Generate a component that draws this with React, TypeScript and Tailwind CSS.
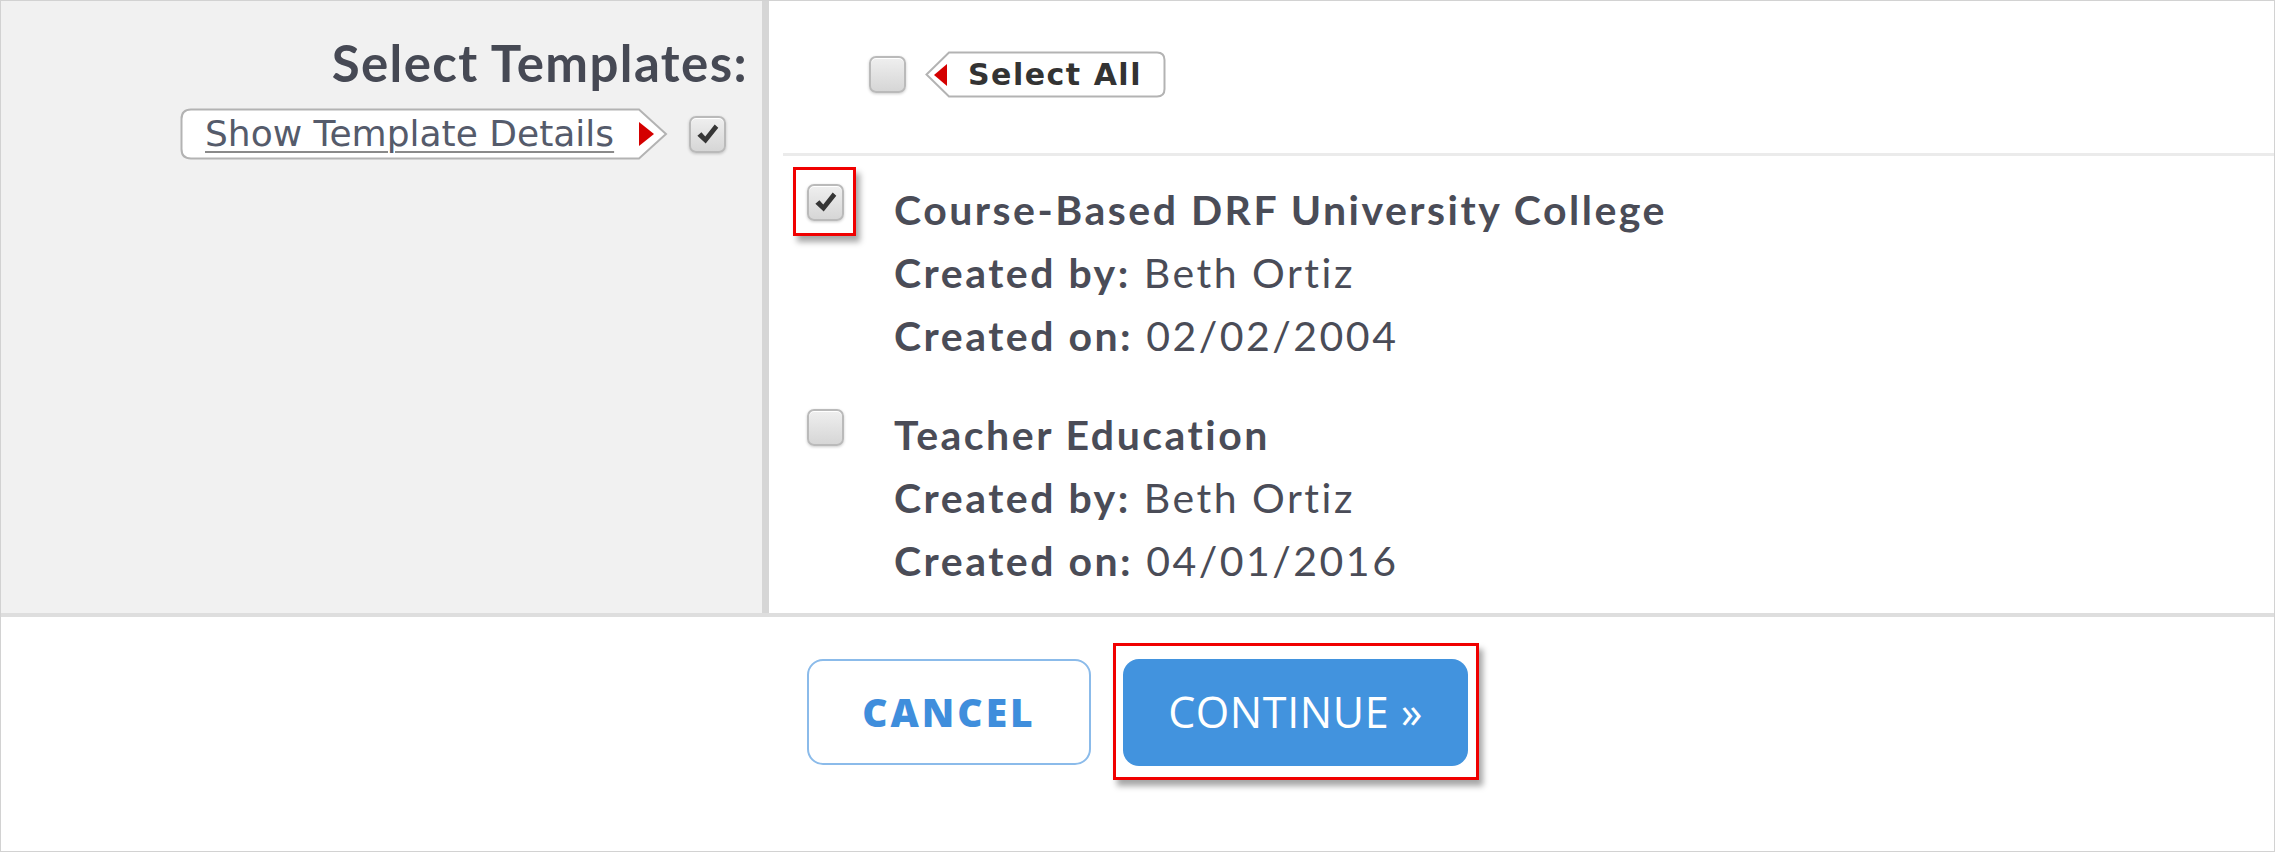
import React from "react";

type Template = { name: string; by: string; on: string; checked: boolean };

const templates: Template[] = [
  { name: "Course-Based DRF University College", by: "Beth Ortiz", on: "02/02/2004", checked: true },
  { name: "Teacher Education", by: "Beth Ortiz", on: "04/01/2016", checked: false },
];

function Check() {
  return (
    <svg width="27" height="27" viewBox="0 0 24 24" className="block">
      <path d="M3 13.2 L6.6 10 L10 13.8 L18.4 3.2 L21.6 6 L10.4 20 Z" fill="#363636" />
    </svg>
  );
}

function Checkbox({ checked }: { checked: boolean }) {
  return (
    <div className="w-[37px] h-[37px] shrink-0 rounded-[7px] border-2 border-[#bababa] bg-gradient-to-b from-[#efefef] to-[#d6d6d6] shadow-[inset_0_1px_0_#fff,0_1px_3px_rgba(0,0,0,0.2)] flex items-center justify-center">
      {checked && <Check />}
    </div>
  );
}

function ShowDetailsTag() {
  return (
    <button className="relative w-[488px] h-[52px] flex items-center pl-[25px]">
      <svg width="488" height="52" viewBox="0 0 488 52" className="absolute inset-0">
        <path
          d="M11 1.5 H459 L486 26 L459 50.5 H11 Q1.5 50.5 1.5 41 V11 Q1.5 1.5 11 1.5 Z"
          fill="#fff"
          stroke="#b3b3b3"
          strokeWidth="2"
        />
      </svg>
      <span className="relative font-['DejaVu_Sans',sans-serif] text-[36px] leading-none text-[#555b6b] underline decoration-[#8a8a8a] decoration-2 underline-offset-[5px]">
        Show Template Details
      </span>
      <svg width="15" height="24" viewBox="0 0 15 24" className="relative ml-[25px]">
        <path d="M0 0 L15 12 L0 24 Z" fill="#d40000" />
      </svg>
    </button>
  );
}

function SelectAllTag() {
  return (
    <button className="relative w-[241px] h-[47px] flex items-center pl-[9px]">
      <svg width="241" height="47" viewBox="0 0 241 47" className="absolute inset-0">
        <path
          d="M24 1.5 H232 Q239.5 1.5 239.5 9 V38 Q239.5 45.5 232 45.5 H24 L1.5 23.5 Z"
          fill="#fff"
          stroke="#b3b3b3"
          strokeWidth="2"
        />
      </svg>
      <svg width="13" height="22" viewBox="0 0 13 22" className="relative">
        <path d="M13 0 L0 11 L13 22 Z" fill="#d40000" />
      </svg>
      <span className="relative ml-[21px] font-['DejaVu_Sans',sans-serif] font-bold text-[30px] leading-none tracking-[1.5px] text-[#333]">
        Select All
      </span>
    </button>
  );
}

function TemplateRow({ t }: { t: Template }) {
  return (
    <div className="flex">
      <div className="relative mt-[6px] h-[37px]">
        {t.checked && (
          <div className="absolute left-[-14px] right-[-12px] top-[-17px] bottom-[-15px] border-[3px] border-[#f00000] shadow-[4px_6px_6px_rgba(0,0,0,0.35)]" />
        )}
        <Checkbox checked={t.checked} />
      </div>
      <div className="ml-[50px] text-[41px] leading-[63px] tracking-[2.5px] text-[#4a4c57]">
        <div className="font-bold">{t.name}</div>
        <div>
          <span className="font-bold">Created by:</span> {t.by}
        </div>
        <div>
          <span className="font-bold">Created on:</span> {t.on}
        </div>
      </div>
    </div>
  );
}

export default function App() {
  return (
    <div className="w-[2275px] h-[852px] border border-[#d2d2d2] bg-white flex flex-col font-['Lato',sans-serif]">
      <div className="flex h-[616px] border-b-[4px] border-[#dedede]">
        <div className="w-[768px] bg-[#f1f1f1] border-r-[7px] border-[#d6d6d6] flex flex-col items-end pr-[14px] pt-[31px]">
          <h2 className="text-[51px] leading-[61px] font-bold tracking-[1.4px] text-[#464954]">Select Templates:</h2>
          <div className="mt-[15px] mr-[22px] flex items-center gap-[21px]">
            <ShowDetailsTag />
            <Checkbox checked />
          </div>
        </div>

        <div className="flex-1 pt-[50px]">
          <div className="pl-[100px] flex items-center gap-[19px]">
            <Checkbox checked={false} />
            <SelectAllTag />
          </div>
          <div className="ml-[14px] mt-[55px] h-[3px] bg-[#ebebeb]" />
          <div className="pl-[38px] pt-[22px] flex flex-col gap-[36px]">
            {templates.map((t) => (
              <TemplateRow key={t.name} t={t} />
            ))}
          </div>
        </div>
      </div>

      <div className="flex-1 flex justify-center items-start pt-[42px] gap-[32px] font-['Open_Sans',sans-serif]">
        <button className="w-[284px] h-[106px] rounded-[16px] border-2 border-[#8bbbea] bg-white text-[#3f8edc] text-[39px] font-extrabold tracking-[3px]">
          CANCEL
        </button>
        <div className="relative">
          <div className="absolute left-[-10px] right-[-11px] top-[-16px] bottom-[-14px] border-[3px] border-[#f00000] shadow-[4px_6px_6px_rgba(0,0,0,0.35)]" />
          <button className="relative w-[345px] h-[107px] rounded-[16px] bg-[#4293de] text-white text-[43px] tracking-[0.6px]">
            CONTINUE »
          </button>
        </div>
      </div>
    </div>
  );
}
